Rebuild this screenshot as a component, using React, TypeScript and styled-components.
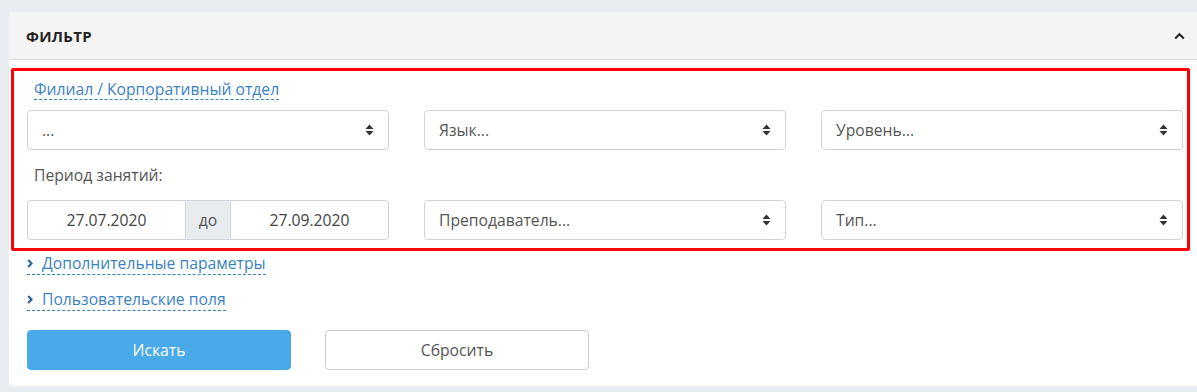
import React from "react";
import styled, { createGlobalStyle } from "styled-components";

const Global = createGlobalStyle`
  html, body { margin: 0; padding: 0; background: #e9ecf1; }
  body { font-family: "Open Sans", "Noto Sans", sans-serif; font-size: 15.7px; color: #495057; }
`;

const Page = styled.div`
  padding: 12px 0 0 9px;
  width: 1197px;
  box-sizing: border-box;
`;

const Panel = styled.section`
  width: 1188px;
  background: #fff;
  border-radius: 4px 0 0 4px;
  overflow: hidden;
  padding-bottom: 16px;
`;

const Header = styled.header`
  height: 47px;
  background: #f4f4f4;
  border-bottom: 1px solid #d9d9d9;
  display: flex;
  align-items: center;
  justify-content: space-between;
  padding: 0 12px 0 17px;
`;

const Title = styled.h2`
  margin: 0;
  font-size: 15px;
  font-weight: 700;
  color: #222;
  letter-spacing: 0.3px;
`;

const Highlight = styled.div`
  margin: 8px 0 0 2px;
  width: 1179px;
  box-sizing: border-box;
  border: 3px solid #ff0000;
  border-radius: 2px;
  padding: 8px 4px 8px 13px;
`;

const Grid = styled.div`
  display: grid;
  grid-template-columns: repeat(3, 1fr);
  column-gap: 35px;
`;

const Label = styled.div<{ $link?: boolean }>`
  grid-column: 1 / -1;
  padding-left: 7px;
  height: ${(p) => (p.$link ? "31px" : "50px")};
  display: flex;
  align-items: ${(p) => (p.$link ? "flex-start" : "center")};
  color: #555;
`;

const DashedLink = styled.a`
  color: #3b82c4;
  text-decoration: none;
  border-bottom: 1px dashed #3b82c4;
  line-height: 20px;
  cursor: pointer;
`;

const Select = styled.div`
  height: 40px;
  box-sizing: border-box;
  border: 1px solid #ced4da;
  border-radius: 4px;
  display: flex;
  align-items: center;
  justify-content: space-between;
  padding: 0 14px 0 14px;
  color: #555;
`;

const DateGroup = styled.div`
  display: flex;
  height: 40px;
`;

const DateInput = styled.div<{ $side: "left" | "right" }>`
  flex: 1;
  box-sizing: border-box;
  border: 1px solid #ced4da;
  border-radius: ${(p) => (p.$side === "left" ? "4px 0 0 4px" : "0 4px 4px 0")};
  display: flex;
  align-items: center;
  justify-content: center;
  color: #444;
`;

const Addon = styled.div`
  width: 44px;
  box-sizing: border-box;
  background: #e9ecef;
  border-top: 1px solid #ced4da;
  border-bottom: 1px solid #ced4da;
  display: flex;
  align-items: center;
  justify-content: center;
  color: #555;
`;

const Extras = styled.div`
  padding: 2px 0 0 18px;
  display: flex;
  flex-direction: column;
  align-items: flex-start;
  gap: 14px;
`;

const ToggleLink = styled.a`
  color: #3b82c4;
  border-bottom: 1px dashed #3b82c4;
  display: inline-flex;
  align-items: center;
  gap: 9px;
  line-height: 21px;
  cursor: pointer;
`;

const Buttons = styled.div`
  display: flex;
  gap: 34px;
  padding: 19px 0 0 18px;
`;

const Button = styled.button<{ $primary?: boolean }>`
  width: 264px;
  height: 40px;
  border-radius: 4px;
  font-family: inherit;
  font-size: 15.7px;
  cursor: pointer;
  border: 1px solid ${(p) => (p.$primary ? "#4aa9e9" : "#cccccc")};
  background: ${(p) => (p.$primary ? "#4aa9e9" : "#fff")};
  color: ${(p) => (p.$primary ? "#fff" : "#555")};
`;

const SortIcon = () => (
  <svg width="9" height="12" viewBox="0 0 9 12">
    <path d="M4.5 0.5 L8.5 5 H0.5 Z" fill="#333" />
    <path d="M4.5 11.5 L8.5 7 H0.5 Z" fill="#333" />
  </svg>
);

const ChevronUp = () => (
  <svg width="11" height="8" viewBox="0 0 11 8">
    <path d="M1.2 6.5 L5.5 2.2 L9.8 6.5" stroke="#222" strokeWidth="2" fill="none" />
  </svg>
);

const ChevronRight = () => (
  <svg width="6" height="9" viewBox="0 0 6 9">
    <path d="M1.2 1 L4.5 4.5 L1.2 8" stroke="#2a64a0" strokeWidth="2.2" fill="none" />
  </svg>
);

const Sel = ({ text }: { text: string }) => (
  <Select>
    <span>{text}</span>
    <SortIcon />
  </Select>
);

export default function App() {
  return (
    <Page>
      <Global />
      <Panel>
        <Header>
          <Title>ФИЛЬТР</Title>
          <ChevronUp />
        </Header>
        <Highlight>
          <Grid>
            <Label $link>
              <DashedLink>Филиал / Корпоративный отдел</DashedLink>
            </Label>
            <Sel text="..." />
            <Sel text="Язык..." />
            <Sel text="Уровень..." />
            <Label>Период занятий:</Label>
            <DateGroup>
              <DateInput $side="left">27.07.2020</DateInput>
              <Addon>до</Addon>
              <DateInput $side="right">27.09.2020</DateInput>
            </DateGroup>
            <Sel text="Преподаватель..." />
            <Sel text="Тип..." />
          </Grid>
        </Highlight>
        <Extras>
          <ToggleLink>
            <ChevronRight />
            Дополнительные параметры
          </ToggleLink>
          <ToggleLink>
            <ChevronRight />
            Пользовательские поля
          </ToggleLink>
        </Extras>
        <Buttons>
          <Button $primary>Искать</Button>
          <Button>Сбросить</Button>
        </Buttons>
      </Panel>
    </Page>
  );
}
